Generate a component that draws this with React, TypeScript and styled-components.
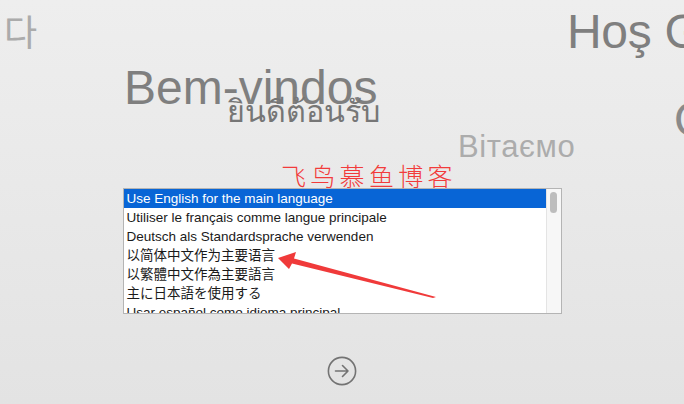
import React from "react";
import styled, { createGlobalStyle } from "styled-components";

const Global = createGlobalStyle`
  html, body { margin: 0; padding: 0; }
  body {
    width: 684px;
    height: 404px;
    overflow: hidden;
    font-family: "Liberation Sans", "Noto Sans", Arial, sans-serif;
  }
`;

const Stage = styled.div`
  position: relative;
  width: 684px;
  height: 404px;
  overflow: hidden;
  background: linear-gradient(#eeeeee, #e3e3e3);
  display: flex;
  flex-direction: column;
  align-items: center;
  padding-top: 188px;
  box-sizing: border-box;
`;

/* Greetings float on a free canvas behind the picker: their places are the content. */
const Greeting = styled.div<{ $x: number; $y: number; $size: number; $color: string; $spacing?: number }>`
  position: absolute;
  left: ${(p) => p.$x}px;
  top: ${(p) => p.$y}px;
  font-size: ${(p) => p.$size}px;
  color: ${(p) => p.$color};
  font-family: "Liberation Sans", "Noto Sans", "Noto Sans CJK KR", "DejaVu Sans", sans-serif;
  line-height: 1;
  white-space: nowrap;
  letter-spacing: ${(p) => p.$spacing ?? -0.3}px;
`;

const Watermark = styled.div`
  position: absolute;
  left: 281px;
  top: 163px;
  font-family: "Noto Sans CJK SC", sans-serif;
  font-weight: 300;
  font-size: 25px;
  letter-spacing: 4.3px;
  line-height: 1;
  color: #f23b3b;
  white-space: nowrap;
`;

const ListBox = styled.div`
  width: 439px;
  height: 126px;
  box-sizing: border-box;
  border: 1px solid #b4b4b4;
  background: #ffffff;
  display: flex;
  overflow: hidden;
`;

const Rows = styled.div`
  flex: 1;
  display: flex;
  flex-direction: column;
`;

const Row = styled.div<{ $selected?: boolean }>`
  height: 19px;
  flex: none;
  line-height: 19px;
  padding-left: 3px;
  font-size: 13.5px;
  font-family: "Liberation Sans", "Noto Sans CJK SC", "Noto Sans CJK JP", sans-serif;
  color: ${(p) => (p.$selected ? "#ffffff" : "#1a1a1a")};
  background: ${(p) => (p.$selected ? "#0865d6" : "transparent")};
  white-space: nowrap;
`;

const ScrollTrack = styled.div`
  width: 15px;
  flex: none;
  background: #f7f7f7;
  border-left: 1px solid #e4e4e4;
  display: flex;
  justify-content: center;
  padding-top: 3px;
  box-sizing: border-box;
`;

const Thumb = styled.div`
  width: 7px;
  height: 21px;
  border-radius: 4px;
  background: #bdbdbd;
`;

const NextButton = styled.button`
  margin-top: 42px;
  width: 30px;
  height: 30px;
  padding: 0;
  border: none;
  background: transparent;
  display: flex;
  align-items: center;
  justify-content: center;
  cursor: pointer;
`;

const ArrowOverlay = styled.svg`
  position: absolute;
  left: 0;
  top: 0;
  pointer-events: none;
`;

const languages = [
  "Use English for the main language",
  "Utiliser le français comme langue principale",
  "Deutsch als Standardsprache verwenden",
  "以简体中文作为主要语言",
  "以繁體中文作為主要語言",
  "主に日本語を使用する",
  "Usar español como idioma principal",
];

export default function App() {
  return (
    <Stage>
      <Global />
      <Greeting $x={4} $y={16} $size={36} $color="#ababab">다</Greeting>
      <Greeting $x={124} $y={64} $size={48} $color="#7f7f7f" $spacing={0}>Bem-vindos</Greeting>
      <Greeting $x={227} $y={96} $size={30.5} $color="#767676" $spacing={0}>ยินดีต้อนรับ</Greeting>
      <Greeting $x={567} $y={8} $size={48} $color="#7f7f7f">Hoş Geldiniz</Greeting>
      <Greeting $x={674} $y={96} $size={48} $color="#8a8a8a">Olá</Greeting>
      <Greeting $x={458} $y={131} $size={31} $color="#acacac" $spacing={0.6}>Вітаємо</Greeting>
      <Watermark>飞鸟慕鱼博客</Watermark>

      <ListBox>
        <Rows>
          {languages.map((l, i) => (
            <Row key={l} $selected={i === 0}>
              {l}
            </Row>
          ))}
        </Rows>
        <ScrollTrack>
          <Thumb />
        </ScrollTrack>
      </ListBox>

      <NextButton aria-label="Continue">
        <svg width="30" height="30" viewBox="0 0 30 30">
          <circle cx="15" cy="15" r="13.6" fill="none" stroke="#737373" strokeWidth="1.6" />
          <path d="M8.5 15 H21 M15.5 9.5 L21 15 L15.5 20.5" fill="none" stroke="#737373" strokeWidth="1.6" strokeLinecap="round" strokeLinejoin="round" />
        </svg>
      </NextButton>

      <ArrowOverlay width="684" height="404" viewBox="0 0 684 404">
        <polygon points="278,258 296,252 294,258.5 436,297 433,298 292,263.5 289,269" fill="#f03a3a" />
      </ArrowOverlay>
    </Stage>
  );
}
